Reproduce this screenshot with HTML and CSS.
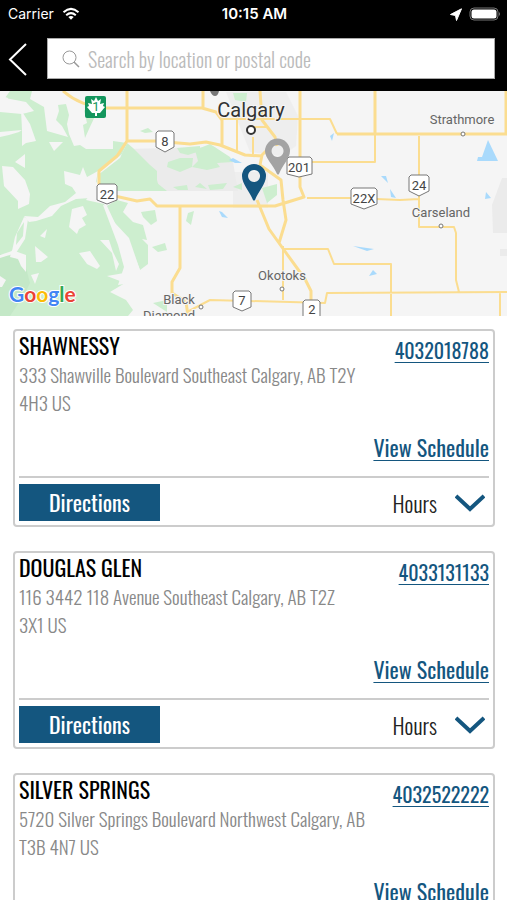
FILE: index.html
```html
<!DOCTYPE html>
<html lang="en">
<head>
  <meta charset="UTF-8">
  <meta name="viewport" content="width=device-width, initial-scale=1">
  <title>Locations</title>
  <link rel="stylesheet" href="styles.css">
</head>
<body>
  <header class="top">
    <div class="status">
      <div class="carrier">
        Carrier
        <svg width="18" height="14" viewBox="0 0 18 14" fill="none" stroke="#fff" stroke-width="2">
          <path d="M1.500 5.200Q9-1.500 16.500 5.200M4.200 8.200Q9 4 13.800 8.200"/>
          <path d="M6.300 9.900Q9 7.900 11.700 9.900L9 12.800z" fill="#fff" stroke="none"/>
        </svg>
      </div>
      <div class="time">10:15 AM</div>
      <div class="battery">
        <svg width="12" height="13" viewBox="0 0 12 13"><path d="M11.500.8L.5 6.500 5.500 7.500 6.500 12.500z" fill="#fff" stroke="#fff" stroke-linejoin="round"/></svg>
        <svg width="32" height="14" viewBox="0 0 32 14">
          <rect x="1" y="1" width="28" height="12" rx="4" fill="none" stroke="#777"/>
          <rect x="2.500" y="2.500" width="25" height="9" rx="2.500" fill="#fff"/>
          <path d="M30 5q2 2 0 4z" fill="#777"/>
        </svg>
      </div>
    </div>
    <form class="search">
      <button class="back" type="button" aria-label="Back">
        <svg width="20" height="34" viewBox="0 0 20 34"><path d="M18 2L2 17.500 18 33" fill="none" stroke="#fff" stroke-width="2"/></svg>
      </button>
      <label class="search-box">
        <svg width="18" height="18" viewBox="0 0 18 18" fill="none" stroke="#999"><circle cx="7.500" cy="7.500" r="6.500"/><path d="M12 12l5 5" stroke-width="1.500"/></svg>
        <input type="search" aria-label="Search" placeholder="Search by location or postal code">
      </label>
    </form>
  </header>

  <svg class="map" viewBox="0 91 507 225" preserveAspectRatio="xMidYMid slice" role="img" aria-label="Map of Calgary">
    <rect y="91" width="507" height="225" fill="#f5f5f5"/>
    <!-- built-up areas -->
    <g fill="#ebebeb">
      <path d="M125 149L215 147 233 162 238 191H157L140 160zM502 178h5v55h-14l-1-28zM500 249h7v7h-7z"/>
      <path d="M226 92h60l12 24-2 30-14 10-32-4zM233 172h35v36h-35z" opacity=".7"/>
    </g>
    <!-- parks -->
    <g fill="#cdeecf">
      <path d="M10 91H32L30 99 44 107 47 131 68 137 62 126 56 120 59 111 58 105 66 104 69 115 67 124 69 134 74 146 80 145 86 149 113 149 113 141 127 143 122 154 98 173 96 187 86 200 104 204 120 245 123 262 130 272 107 276 125 283 110 292 126 300 133 310 128 316H0V112L22 114 34 111 26 102 5 98z"/>
      <path d="M127 143L133 148 150 165 157 171 157 180 160 191H98V175L120 158z"/>
      <path d="M177 148L200 146 200 151 188 155 180 153zM168 162L180 158 193 158 192 167 180 172 167 167zM195 150L210 144 230 157 233 162 217 163 220 167 207 170 192 167 198 161zM157 183l10 8h-10zM173 187l14-2 1 5-10 0zM195 187l5-4 7 6zM208 185l19-2-4 6-13 1zM233 187l9-4v7zM140 131l8-3 5 4-8 1z"/>
      <path d="M262 188L277 184 277 195 267 203zM233 93L247 93 246 102 235 100zM83 125l4-2-3-13 5 3 8-1-8 17-4 9zM188 213l6-2-3 14-5-4z"/>
      <path d="M105 207L117 200 128 203 123 212 133 222 143 225 147 240 142 239 148 245 148 264 140 270 132 250 113 220zM141 212l14-2 2 11-6 4-8-8zM152 247l13-4 2 7-9 2zM153 303l14-3v12z"/>
    </g>
    <path d="M0 254L12 256 25 264 30 283 24 295 10 316H0z" fill="#c4e8c7"/>
    <!-- clearings between the parks -->
    <g fill="#f5f5f5">
      <path d="M2 166L13 167 25 180 30 194 29 204 18 209 18 201 4 186z"/>
      <path d="M64 171l16 4 3-8 4 10 11-6-2 11 4 4-10 12-14 1-15 7-9 10-16 5-7 1-5-6 14 1 12-11 15-4 11-9-4-6-7-3z"/>
      <path d="M24 217l4 2-3 20-9 14-16 5v-3l12-4 3-14z"/>
      <path d="M72 209l11-3 4 9-5 3 4 7-7 4-2 5-8-7zM79 253l11-2 10 15-3 3-10-5zM35 246l13 11-7 5-5 0zM100 240l9 0 4 12 6 12-3 7-4-18zM47 229l-7 7 5 2zM12 250l14 5 0 17-5-6-3-7-8-2zM0 276l6 4-4 7H0zM31 275l8-2-4 11z"/>
      <path d="M15 162l10-8v14zM49 142l14 0-9 9zM22 130l-1-20 9 14 6 17-10 2-4 3zM0 95l8 3-1 12-7 2zM0 132l22-2-3 2-10 3-9 2z"/>
      <path d="M103 205l4 1 8 17 14 15 11 32-10 13-12 2 6-18-6-22z"/>
    </g>
    <path d="M24 222l-7 11-1 12 7-9z" fill="#cdeecf"/>
    <g fill="#a9dafc">
      <path d="M488 140l10 21-21 0 1-4 4 0zM485 199l1-7 5 6zM381 176l5 0 2 7zM390 189l6 9-5-1zM353 246l21 3-7 2zM369 276l4-6 4 4zM229 160l4-2 9 5-7 0zM219 211l3 1 6 6-6-1zM330 136l4-3-2 8z"/>
    </g>
    <!-- roads -->
    <g fill="none" stroke="#fbdd90" stroke-linejoin="round">
      <path d="M63 91Q80 106 105 108H202L216 112 222 120V145M127 91V141L117 156 99 171V184L106 194 137 201 150 199 157 206H275L304 197 300 187V91M203 91v17M127 141H155L190 144 206 142 220 145 245 155 262 156M260 91L262 120 275 137 277 146M270 147L262 155 260 165 281 180 283 200 286 220 279 243M257 200L269 229 284 250 305 279 311 291V316M337 134H507M506 91V134M375 91V134" stroke-width="3"/>
      <path d="M222 119H330L337 134M237 118V152M253 137V154M248 127H266M375 134V162H310M307 198H353L400 200 419 199M419 136V227H454L456 233V280L459 292M283 249H328L334 264H391V316M283 246V300M187 312L210 300 290 302 325 303 327 293 507 292M500 293V316" stroke-width="2"/>
      <path d="M180 207V268L172 282V293L186 302 188 316" stroke-width="3"/>
    </g>
    <!-- highway shields -->
    <rect x="85" y="96" width="21" height="22" rx="2" fill="#14965d"/>
    <path d="M96 97l2 4 3-2-1 5 4-1-1 3 2 1-5 6-3 0v3h-2v-3l-3 0-5-6 2-1-1-3 4 1-1-5 3 2z" fill="#fff"/>
    <g fill="#fff" stroke="#777">
      <path d="M158 131h14l2 2v14l-9 5-9-5V133zM99 184h16l2 2v14l-10 4-10-4V186zM289 157h21l2 2v15l-13 3-12-3V159zM353 188h22l2 2v14l-13 5-13-5V190zM411 175h16l2 2v14l-10 5-10-5V177zM235 291h14l2 2v14l-9 4-9-4V293zM305 300h13l2 2v16H303V302z"/>
    </g>
    <g class="shield-text">
      <text x="96" y="111" class="green">1</text>
      <text x="165" y="146">8</text><text x="107" y="199">22</text>
      <text x="299" y="172">201</text><text x="364" y="203">22X</text>
      <text x="419" y="190">24</text><text x="242" y="305">7</text>
      <text x="312" y="314">2</text>
    </g>
    <g class="places">
      <text x="251" y="117" class="city">Calgary</text>
      <text x="462" y="124">Strathmore</text>
      <text x="441" y="217">Carseland</text>
      <text x="282" y="280">Okotoks</text>
      <text x="179" y="304">Black</text>
      <text x="169" y="320">Diamond</text>
    </g>
    <g fill="#fff" stroke="#777">
      <circle cx="251" cy="130" r="4" stroke="#333" stroke-width="2"/>
      <circle cx="463" cy="134" r="2"/><circle cx="441" cy="226" r="2"/>
      <circle cx="282" cy="289" r="2"/><circle cx="201" cy="307" r="2"/>
    </g>
    <!-- pins -->
    <path d="M210 91h9q-1 5-4 5t-5-5z" fill="#777"/>
    <path d="M277 174c-3-8-12-16-12-23a12 12 0 0 1 25 0c0 7-8 15-11 23q-1 1-2 0zM277.500 145a6 6 0 1 0 .1 0z" fill="#a3a3a3" fill-rule="evenodd"/>
    <path d="M253 200c-3-8-11-16-11-24a12 12 0 0 1 24 0c0 8-8 16-11 24q-1 1-2 0zM254 170a6 6 0 1 0 .1 0z" fill="#14567f" fill-rule="evenodd"/>
    <text x="9" y="302" class="google"><tspan fill="#4285f4">G</tspan><tspan fill="#ea4335">o</tspan><tspan fill="#fbbc05">o</tspan><tspan fill="#4285f4">g</tspan><tspan fill="#34a853">l</tspan><tspan fill="#ea4335">e</tspan></text>
  </svg>

  <main class="locations">
    <article class="card">
      <div class="info">
        <div class="where">
          <h2>SHAWNESSY</h2>
          <address>333 Shawville Boulevard Southeast Calgary, AB T2Y<br>4H3 US</address>
        </div>
        <div class="links">
          <a class="phone" href="tel:4032018788">4032018788</a>
          <a class="schedule" href="#">View Schedule</a>
        </div>
      </div>
      <div class="actions">
        <button class="directions" type="button">Directions</button>
        <button class="hours" type="button">Hours
          <svg width="30" height="18" viewBox="0 0 30 18"><path d="M1 2l14 13L29 2" fill="none" stroke="#14567f" stroke-width="4"/></svg>
        </button>
      </div>
    </article>

    <article class="card">
      <div class="info">
        <div class="where">
          <h2>DOUGLAS GLEN</h2>
          <address>116 3442 118 Avenue Southeast Calgary, AB T2Z<br>3X1 US</address>
        </div>
        <div class="links">
          <a class="phone" href="tel:4033131133">4033131133</a>
          <a class="schedule" href="#">View Schedule</a>
        </div>
      </div>
      <div class="actions">
        <button class="directions" type="button">Directions</button>
        <button class="hours" type="button">Hours
          <svg width="30" height="18" viewBox="0 0 30 18"><path d="M1 2l14 13L29 2" fill="none" stroke="#14567f" stroke-width="4"/></svg>
        </button>
      </div>
    </article>

    <article class="card">
      <div class="info">
        <div class="where">
          <h2>SILVER SPRINGS</h2>
          <address>5720 Silver Springs Boulevard Northwest Calgary, AB<br>T3B 4N7 US</address>
        </div>
        <div class="links">
          <a class="phone" href="tel:4032522222">4032522222</a>
          <a class="schedule" href="#">View Schedule</a>
        </div>
      </div>
      <div class="actions">
        <button class="directions" type="button">Directions</button>
        <button class="hours" type="button">Hours
          <svg width="30" height="18" viewBox="0 0 30 18"><path d="M1 2l14 13L29 2" fill="none" stroke="#14567f" stroke-width="4"/></svg>
        </button>
      </div>
    </article>
  </main>
</body>
</html>
```
FILE: styles.css
```css
* { box-sizing: border-box; }

body {
  margin: 0;
  height: 100vh;
  display: flex;
  flex-direction: column;
  background: #fff;
  font-family: Oswald, "Liberation Sans Narrow", "Liberation Sans", sans-serif;
  font-size: 20px;
}

button {
  border: 0;
  padding: 0;
  background: none;
  font: inherit;
  cursor: pointer;
}

svg {
  display: block;
  flex: none;
}

/* header */
.top {
  flex: none;
  background: #000;
  color: #fff;
  padding-bottom: 12px;
}

.status {
  height: 28px;
  padding: 0 6px 0 8px;
  display: grid;
  grid-template-columns: 1fr auto 1fr;
  align-items: center;
  font: 14px/28px Inter, sans-serif;
}
.carrier {
  display: flex;
  align-items: center;
  gap: 8px;
}
.time {
  font-size: 15px;
  font-weight: 600;
}
.battery {
  display: flex;
  align-items: center;
  justify-content: flex-end;
  gap: 7px;
}

.search {
  display: flex;
  align-items: center;
  gap: 19px;
  margin: 10px 12px 0 8px;
}
.search-box {
  flex: 1;
  display: flex;
  align-items: center;
  gap: 8px;
  height: 41px;
  padding: 0 14px;
  background: #fff;
  border: 1px solid #aaa;
}
.search-box input {
  flex: 1;
  min-width: 0;
  border: 0;
  padding: 0;
  outline: 0;
  background: none;
  font: inherit;
  font-weight: 300;
}
.search-box input::placeholder {
  color: #bbb;
}

/* map */
.map {
  width: 100%;
  height: 225px;
}
.places {
  font: 13px Roboto, sans-serif;
  fill: #666;
  text-anchor: middle;
  paint-order: stroke;
  stroke: #f5f5f5;
  stroke-width: 2px;
}
.city {
  font-size: 20px;
  fill: #333;
}
.shield-text {
  font: 13px Roboto, sans-serif;
  fill: #444;
  text-anchor: middle;
}
.green {
  fill: #14965d;
}
.google {
  font: 700 21px Lato, sans-serif;
  paint-order: stroke;
  stroke: #fff;
  stroke-width: 2px;
}

/* location cards */
.locations {
  flex: 1;
  min-height: 0;
  overflow-y: auto;
  scrollbar-width: none;
  padding: 13px 12px 12px 13px;
}
.card {
  border: 2px solid #ccc;
  border-radius: 4px;
  padding: 0 4px 4px;
  margin-bottom: 24px;
}
.info {
  display: flex;
  justify-content: space-between;
  height: 147px;
  border-bottom: 2px solid #ccc;
}
.where h2 {
  margin: 0;
  font-size: 22px;
  font-weight: 400;
  line-height: 29px;
  color: #000;
}
.where address {
  font-size: 19px;
  font-style: normal;
  font-weight: 300;
  line-height: 28px;
  color: #888;
  white-space: nowrap;
}
.links {
  display: flex;
  flex-direction: column;
  justify-content: space-between;
  align-items: flex-end;
  padding: 5px 0 15px;
}
.links a {
  color: #14567f;
  line-height: 28px;
  text-decoration-thickness: 1px;
  text-underline-offset: 3px;
  white-space: nowrap;
}
.links .schedule {
  font-size: 22px;
}
.actions {
  display: flex;
  justify-content: space-between;
  align-items: center;
  padding-top: 6px;
}
.directions {
  width: 30%;
  height: 37px;
  background: #14567f;
  color: #fff;
  font-size: 22px;
  line-height: 34px;
  padding-bottom: 2px;
}
.hours {
  display: flex;
  align-items: center;
  gap: 18px;
  padding-right: 4px;
  color: #222;
  font-size: 22px;
  font-weight: 300;
}
```
